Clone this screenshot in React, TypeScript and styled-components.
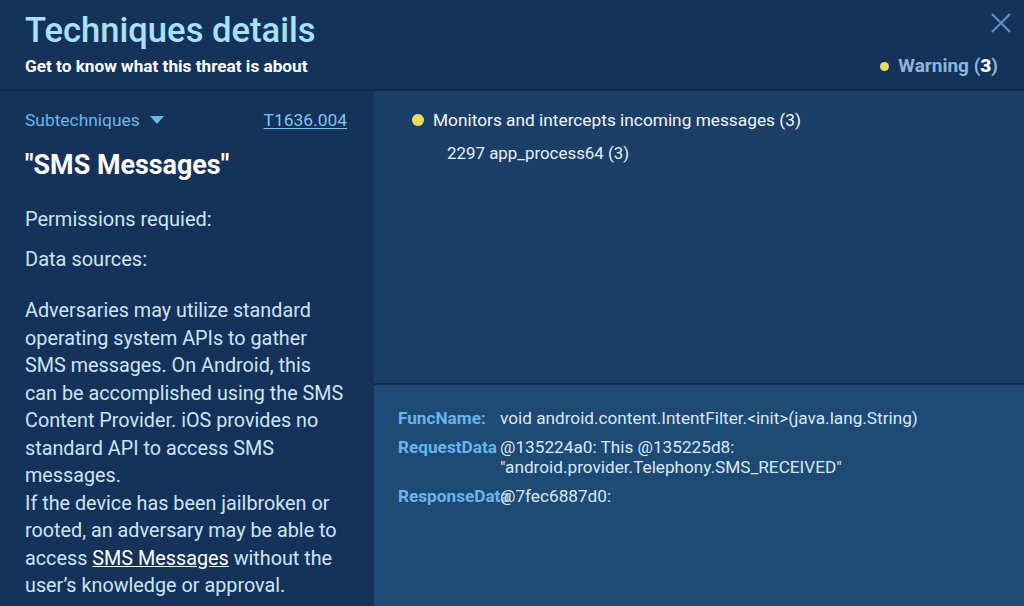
import { FC } from "react";
import styled, { createGlobalStyle } from "styled-components";

const Global = createGlobalStyle`
    html, body {
        margin: 0;
        padding: 0;
        background: #15335a;
    }
    body {
        font-family: Roboto, "Liberation Sans", sans-serif;
    }
`;

const Page = styled.div`
    width: 1024px;
    height: 606px;
    display: flex;
    flex-direction: column;
    overflow: hidden;
    background: #15335a;
`;

const Header = styled.header`
    height: 91px;
    box-sizing: border-box;
    padding: 10px 26px 0 25px;
    display: flex;
    justify-content: space-between;
    border-bottom: 2px solid #0f2a4a;
`;

const TitleBlock = styled.div`
    display: flex;
    flex-direction: column;
`;

const Title = styled.h1`
    margin: 0;
    font-size: 34.6px;
    font-weight: 500;
    color: #a9e2f6;
    line-height: 40px;
`;

const Subtitle = styled.div`
    margin-top: 6px;
    font-size: 17.2px;
    line-height: 20px;
    font-weight: 700;
    color: #ffffff;
`;

const HeaderRight = styled.div`
    display: flex;
    flex-direction: column;
    align-items: flex-end;
    justify-content: space-between;
    padding-bottom: 12px;
`;

const Close = styled.button`
    background: none;
    border: none;
    padding: 0;
    margin-right: -14px;
    margin-top: 2px;
    cursor: pointer;
    svg {
        display: block;
    }
`;

const Warning = styled.div`
    display: flex;
    align-items: center;
    font-size: 19px;
    line-height: 22px;
    font-weight: 700;
    color: #8bb5da;
    b {
        color: #ffffff;
    }
`;

const Dot = styled.span<{ $size: number }>`
    width: ${(p) => p.$size}px;
    height: ${(p) => p.$size}px;
    border-radius: 50%;
    background: #e9dd5b;
    display: inline-block;
    flex-shrink: 0;
`;

const Body = styled.div`
    flex: 1;
    display: flex;
    min-height: 0;
`;

const Side = styled.aside`
    width: 374px;
    box-sizing: border-box;
    padding: 17px 23px 0 25px;
    background: #15335a;
    border-right: 1px solid #183a60;
`;

const SideTop = styled.div`
    display: flex;
    justify-content: space-between;
    align-items: center;
    font-size: 17.4px;
    height: 24px;
    padding-right: 3px;
`;

const Dropdown = styled.div`
    display: flex;
    align-items: center;
    gap: 10px;
    color: #6bb8ea;
`;

const Code = styled.a`
    color: #7fc6ef;
    text-decoration: underline;
    text-underline-offset: 2px;
`;

const Name = styled.h2`
    margin: 17px 0 0;
    font-size: 26.9px;
    font-weight: 700;
    color: #ffffff;
    line-height: 32px;
`;

const Meta = styled.div<{ $top: number }>`
    font-size: 20px;
    color: #cde5f5;
    line-height: 28px;
    margin-top: ${(p) => p.$top}px;
`;

const Description = styled.p`
    margin: 24px 0 0;
    max-width: 321px;
    font-size: 19.8px;
    line-height: 27.5px;
    color: #cde5f5;
    a {
        color: #ffffff;
        text-decoration: underline;
    }
`;

const Main = styled.main`
    flex: 1;
    display: flex;
    flex-direction: column;
`;

const Events = styled.section`
    height: 294px;
    box-sizing: border-box;
    background: #1b3f66;
    padding: 17px 0 0 38px;
    border-bottom: 2px solid #12304f;
`;

const EventRow = styled.div`
    display: flex;
    align-items: center;
    gap: 9px;
    font-size: 17.3px;
    color: #f2f6fa;
    line-height: 24px;
`;

const Process = styled.div`
    margin: 11px 0 0 35px;
    font-size: 16.9px;
    color: #e6eef6;
    line-height: 20px;
`;

const Details = styled.section`
    flex: 1;
    background: #1e4a76;
    padding: 23px 0 0 24px;
    display: grid;
    grid-template-columns: 102px 1fr;
    row-gap: 9px;
    align-content: start;
    font-size: 17.2px;
    line-height: 20px;
`;

const Label = styled.div`
    color: #67b5ea;
    font-weight: 700;
    font-size: 17.2px;
    white-space: nowrap;
`;

const Value = styled.div`
    color: #dbe8f4;
`;

const DropCaret: FC = () => (
    <svg width="14" height="8" viewBox="0 0 14 8">
        <path d="M0 0 H14 L7 8 Z" fill="#6bb8ea" />
    </svg>
);

const CloseIcon: FC = () => (
    <svg width="22" height="22" viewBox="0 0 22 22">
        <path d="M2 2 L20 20 M20 2 L2 20" stroke="#5b8fc6" strokeWidth="2.2" />
    </svg>
);

const App: FC = () => {
    return (
        <Page>
            <Global />
            <Header>
                <TitleBlock>
                    <Title>Techniques details</Title>
                    <Subtitle>Get to know what this threat is about</Subtitle>
                </TitleBlock>
                <HeaderRight>
                    <Close aria-label="Close">
                        <CloseIcon />
                    </Close>
                    <Warning>
                        <Dot $size={9} style={{ marginRight: 9 }} />
                        Warning (<b>3</b>)
                    </Warning>
                </HeaderRight>
            </Header>
            <Body>
                <Side>
                    <SideTop>
                        <Dropdown>
                            Subtechniques <DropCaret />
                        </Dropdown>
                        <Code>T1636.004</Code>
                    </SideTop>
                    <Name>"SMS Messages"</Name>
                    <Meta $top={24}>Permissions requied:</Meta>
                    <Meta $top={12}>Data sources:</Meta>
                    <Description>
                        Adversaries may utilize standard operating system APIs to gather SMS messages. On Android, this
                        can be accomplished using the SMS Content Provider. iOS provides no standard API to access SMS
                        messages.
                        <br />
                        If the device has been jailbroken or rooted, an adversary may be able to access{" "}
                        <a>SMS Messages</a> without the user’s knowledge or approval.
                    </Description>
                </Side>
                <Main>
                    <Events>
                        <EventRow>
                            <Dot $size={12} />
                            Monitors and intercepts incoming messages (3)
                        </EventRow>
                        <Process>2297 app_process64 (3)</Process>
                    </Events>
                    <Details>
                        <Label>FuncName:</Label>
                        <Value>void android.content.IntentFilter.&lt;init&gt;(java.lang.String)</Value>
                        <Label>RequestData</Label>
                        <Value>
                            @135224a0: This @135225d8:
                            <br />
                            "android.provider.Telephony.SMS_RECEIVED"
                        </Value>
                        <Label>ResponseData</Label>
                        <Value>@7fec6887d0:</Value>
                    </Details>
                </Main>
            </Body>
        </Page>
    );
};

export default App;
